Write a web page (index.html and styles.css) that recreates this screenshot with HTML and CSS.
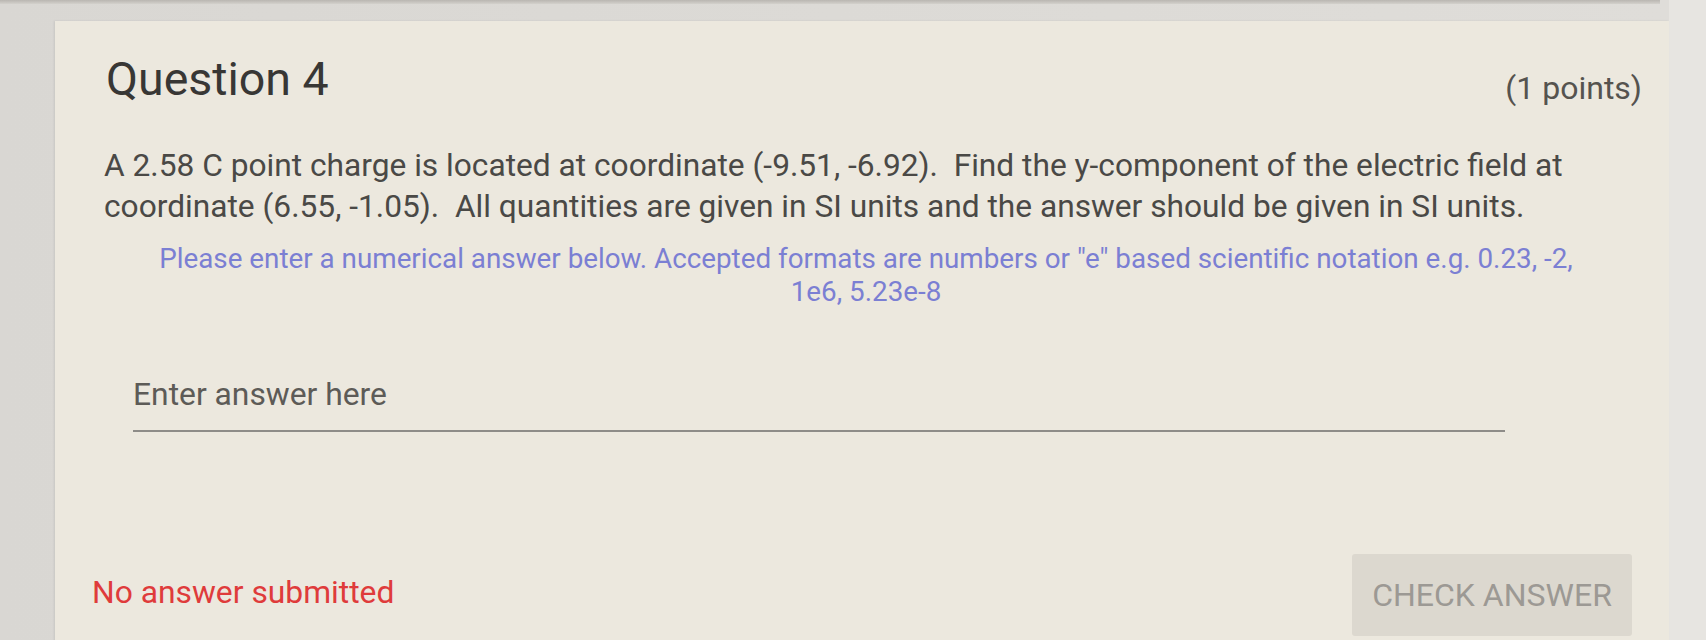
FILE: index.html
```html
<!DOCTYPE html>
<html lang="en">
<head>
<meta charset="utf-8">
<title>Question 4</title>
<link rel="stylesheet" href="styles.css">
</head>
<body>
<div class="prev-edge"></div>
<div class="page">
  <section class="card">
    <header class="q-head">
      <h2 class="q-title">Question 4</h2>
      <span class="q-points">(1 points)</span>
    </header>
    <p class="q-text">A 2.58 C point charge is located at coordinate (-9.51, -6.92).&nbsp; Find the y-component of the electric field at coordinate (6.55, -1.05).&nbsp; All quantities are given in SI units and the answer should be given in SI units.</p>
    <p class="q-note">Please enter a numerical answer below. Accepted formats are numbers or "e" based scientific notation e.g. 0.23, -2, 1e6, 5.23e-8</p>
    <div class="answer">
      <input class="answer-input" type="text" placeholder="Enter answer here">
    </div>
    <footer class="q-foot">
      <span class="status">No answer submitted</span>
      <button class="check-btn" type="button">CHECK ANSWER</button>
    </footer>
  </section>
</div>
</body>
</html>
```

FILE: styles.css
```css
html, body {
  margin: 0;
  padding: 0;
}

body {
  width: 1706px;
  height: 640px;
  overflow: hidden;
  background: linear-gradient(to right, #d9d7d3 0, #dfddd9 1669px, #e7e5e1 1669px);
  font-family: Roboto, "Noto Sans", "Liberation Sans", sans-serif;
}

.prev-edge {
  height: 4px;
  width: 1660px;
  background: linear-gradient(to bottom, #b9b6b1, #d3d1cc);
}

.page {
  padding: 17px 0 0 55px;
}

.card {
  width: 1614px;
  height: 640px;
  background: #ece8de;
  box-sizing: border-box;
  padding: 33px 0 0 0;
  box-shadow: -1px 0 2px rgba(0, 0, 0, 0.08);
}

.q-head {
  display: flex;
  justify-content: space-between;
  align-items: flex-end;
  padding: 0 27px 0 51px;
  height: 50px;
}

.q-title {
  margin: 0;
  font-weight: 400;
  font-size: 46.5px;
  line-height: 50px;
  color: #383735;
}

.q-points {
  font-size: 32px;
  line-height: 40px;
  color: #55534f;
  margin-bottom: -4px;
}

.q-text {
  margin: 41px 0 0 0;
  padding: 0 56px 0 49px;
  font-size: 31.7px;
  line-height: 41px;
  color: #4a4946;
}

.q-note {
  margin: 15px 0 0 0;
  padding: 0 84px 0 92px;
  text-align: center;
  font-size: 27.8px;
  line-height: 33px;
  color: #7b7fd3;
}

.answer {
  margin: 50px 0 0 78px;
  width: 1372px;
  border-bottom: 2px solid #8e8c88;
}

.answer-input {
  display: block;
  width: 100%;
  box-sizing: border-box;
  border: 0;
  outline: 0;
  background: transparent;
  padding: 0;
  height: 72px;
  font-family: Roboto, "Noto Sans", "Liberation Sans", sans-serif;
  font-size: 31.8px;
  color: #5d5b57;
}

.answer-input::placeholder {
  color: #5d5b57;
  opacity: 1;
}

.q-foot {
  display: flex;
  justify-content: space-between;
  align-items: center;
  margin-top: 122px;
  padding: 0 37px 0 37px;
}

.status {
  font-size: 31.8px;
  color: #df3b3b;
  margin-top: -6px;
}

.check-btn {
  width: 280px;
  height: 82px;
  border: 0;
  border-radius: 3px;
  background: #dcd8cf;
  font-family: Roboto, "Noto Sans", "Liberation Sans", sans-serif;
  font-size: 32px;
  color: #9c9994;
  padding: 0;
}
```
